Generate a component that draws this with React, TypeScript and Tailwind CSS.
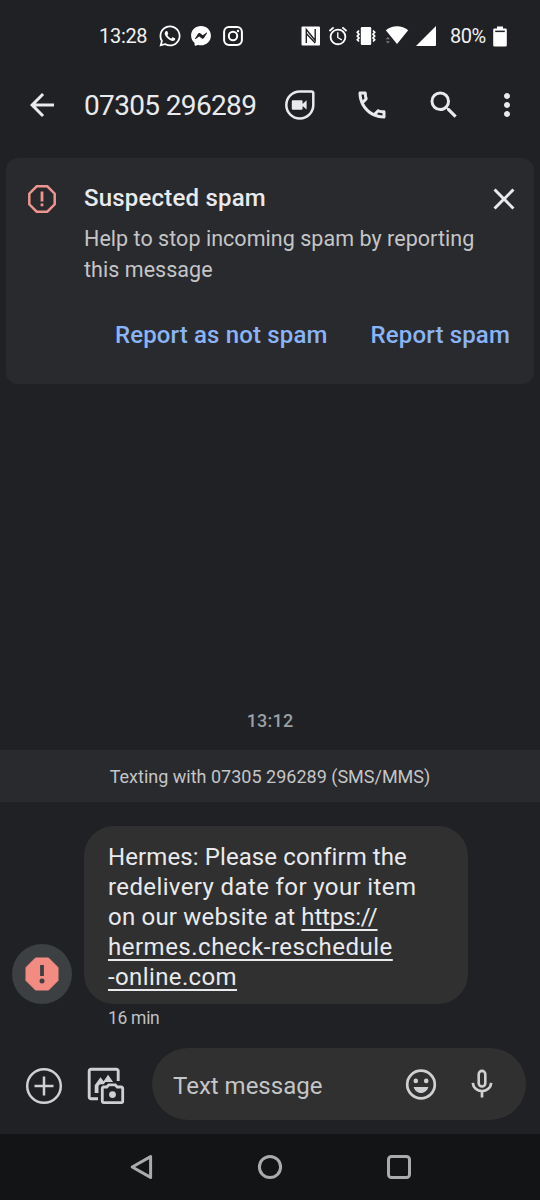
import type { ReactNode } from 'react';
import { MdAlarm, MdArrowBack, MdClose, MdMoreVert, MdOutlinePhone, MdSearch } from 'react-icons/md';
import { FaWhatsapp } from 'react-icons/fa';

type IconProps = { className?: string };

const WhatsappIcon = ({ className }: IconProps) => <FaWhatsapp size={24} className={className} />;

const MessengerIcon = ({ className }: IconProps) => (
  <svg width="20" height="20" viewBox="0 0 20 20" className={className}>
    <path
      fill="currentColor"
      d="M10 0C4.4 0 .1 4.1.1 9.5c0 2.9 1.2 5.4 3.1 7.1.2.1.3.4.3.6l.1 1.9c0 .6.6.9 1.1.7l2-.9h.5c.9.3 1.8.4 2.8.4 5.6 0 9.9-4.1 9.9-9.6S15.6 0 10 0z"
    />
    <path fill="#202124" d="M4 12.4 7 7.7c.5-.7 1.500-.9 2.200-.4l2.300 1.700c.2.2.5.2.7 0l3.100-2.300c.4-.3 1 .2.7.6l-3 4.700c-.5.7-1.500.9-2.200.4l-2.300-1.700c-.2-.2-.5-.2-.7 0l-3.100 2.300c-.4.3-1-.2-.7-.6z" />
  </svg>
);

const InstagramIcon = ({ className }: IconProps) => (
  <svg width="20" height="20" viewBox="0 0 20 20" className={className} fill="none" stroke="currentColor" strokeWidth="2">
    <rect x="1.1" y="1.1" width="17.8" height="17.8" rx="4.8" />
    <circle cx="10" cy="10" r="4.2" />
    <circle cx="15" cy="5" r="1.2" fill="currentColor" stroke="none" />
  </svg>
);

const NfcIcon = ({ className }: IconProps) => (
  <svg width="20" height="20" viewBox="0 0 20 20" className={className}>
    <rect x="0.5" y="0.5" width="18.5" height="19" rx="1" fill="currentColor" />
    <path d="M5.300 17V3.500L14.200 14.500V3M5.300 7.500 14.200 17" fill="none" stroke="#202124" strokeWidth="1.400" />
  </svg>
);

const VibrateIcon = ({ className }: IconProps) => (
  <svg width="20" height="20" viewBox="0 0 20 20" className={className}>
    <rect x="4.8" y="1" width="10.4" height="18" rx="1.2" fill="currentColor" />
    <g fill="none" stroke="currentColor" strokeWidth="1.7">
      <path d="M3 4.5 1.3 6.3 3 8.2 1.3 10.1 3 12 1.3 13.8 3 15.5" />
      <path d="M17 4.5 18.7 6.3 17 8.2 18.7 10.1 17 12 18.7 13.8 17 15.5" />
    </g>
  </svg>
);

const WifiIcon = ({ className }: IconProps) => (
  <svg width="24" height="20" viewBox="0 0 24 20" className={className}>
    <path fill="currentColor" d="M.8 5.2C7.3-.2 16.7-.2 23.2 5.2L12 19z" />
    <path fill="#77787a" d="M.8 14.3 2.9 12l2.1 2.300zM.8 16.200h4.200l-2.100 2.200z" />
  </svg>
);

const SignalIcon = ({ className }: IconProps) => (
  <svg width="22" height="22" viewBox="0 0 22 22" className={className}>
    <path fill="currentColor" d="M1 21 21 1v19a1 1 0 0 1-1 1z" />
  </svg>
);

const BatteryIcon = ({ className }: IconProps) => (
  <svg width="14" height="21" viewBox="0 0 14 21" className={className}>
    <path fill="currentColor" d="M4 .5h6v2h2.500a1.300 1.300 0 0 1 1.300 1.300v15.400a1.300 1.300 0 0 1-1.300 1.300h-11A1.300 1.300 0 0 1 .2 19.200V3.800a1.300 1.300 0 0 1 1.300-1.300H4z" />
    <path fill="#202124" d="M2.200 4.600h9.600v1.500H2.200z" />
  </svg>
);

const DuoIcon = ({ className }: IconProps) => (
  <svg width="32" height="32" viewBox="0 0 32 32" className={className}>
    <path
      d="M15.800 2.500H27.300a2 2 0 0 1 2 2V15.800A13.500 13.500 0 1 1 15.800 2.500z"
      fill="none"
      stroke="currentColor"
      strokeWidth="2.500"
    />
    <path fill="currentColor" d="M9 11.300h8.400a1.200 1.200 0 0 1 1.200 1.200v2.400l4-3.600v9.200l-4-3.500v2.500a1.200 1.200 0 0 1-1.200 1.200H9a1.200 1.200 0 0 1-1.200-1.200v-7A1.200 1.200 0 0 1 9 11.300z" />
  </svg>
);

const SpamOutlineIcon = ({ className }: IconProps) => (
  <svg width="28" height="28" viewBox="0 0 28 28" className={className}>
    <path d="M8.700 1.300h10.600l7.400 7.400v10.600l-7.400 7.400H8.700l-7.400-7.400V8.700z" fill="none" stroke="currentColor" strokeWidth="2.500" />
    <path d="M12.600 6.600h2.800v9.800h-2.800zM12.600 18.500h2.800v2.800h-2.800z" fill="currentColor" />
  </svg>
);

const SpamBadgeIcon = ({ className }: IconProps) => (
  <svg width="34" height="34" viewBox="0 0 34 34" className={className}>
    <path d="M10.500 1h13L33 10.500v13L23.500 33h-13L1 23.500v-13z" fill="#f28b82" stroke="#f28b82" strokeWidth="1" strokeLinejoin="round" />
    <path d="M15.100 8h3.800v11h-3.800z" fill="#3c4043" />
    <circle cx="17" cy="24" r="2.500" fill="#3c4043" />
  </svg>
);

const AddCircleIcon = ({ className }: IconProps) => (
  <svg width="38" height="38" viewBox="0 0 38 38" className={className} fill="none" stroke="currentColor" strokeWidth="2.500">
    <circle cx="19" cy="19" r="16.800" />
    <path d="M19 9.500v19M9.500 19h19" />
  </svg>
);

const GalleryCameraIcon = ({ className }: IconProps) => (
  <svg width="38" height="38" viewBox="0 0 38 38" className={className}>
    <path d="M31.200 14V4a1.800 1.800 0 0 0-1.800-1.800H4A1.800 1.800 0 0 0 2.200 4v26A1.800 1.800 0 0 0 4 31.800h7" fill="none" stroke="currentColor" strokeWidth="2.900" />
    <path fill="currentColor" d="M7.700 26V18.200l5.800-8 3.100 4 4.500-6.500 5 7.300h-7.500l-2 2.300h-2.500c-1.800 0-2.600 1-2.600 2.600V26z" />
    <path
      d="M16.600 20h3.200l2-2.200h6.400l2 2.200h4.200a1.300 1.300 0 0 1 1.300 1.300v13a1.300 1.300 0 0 1-1.300 1.300H16.600a1.300 1.300 0 0 1-1.300-1.300v-13a1.300 1.300 0 0 1 1.300-1.300z"
      fill="none"
      stroke="currentColor"
      strokeWidth="2.800"
    />
    <circle cx="25.500" cy="27.600" r="3.400" fill="currentColor" />
  </svg>
);

const EmojiIcon = ({ className }: IconProps) => (
  <svg width="32" height="32" viewBox="0 0 32 32" className={className}>
    <circle cx="16" cy="16.500" r="13.800" fill="none" stroke="currentColor" strokeWidth="2.700" />
    <circle cx="10.800" cy="12.900" r="2.300" fill="currentColor" />
    <circle cx="21.200" cy="12.900" r="2.300" fill="currentColor" />
    <path d="M8.600 19.100h14.800c-1 3.600-3.900 6-7.400 6s-6.400-2.400-7.400-6z" fill="currentColor" />
  </svg>
);

const MicIcon = ({ className }: IconProps) => (
  <svg width="24" height="32" viewBox="0 0 24 32" className={className} fill="none" stroke="currentColor">
    <rect x="8.700" y="2.900" width="6.600" height="15.600" rx="3.300" strokeWidth="2.600" />
    <path d="M2.800 14.800c.4 5 4.300 8.300 9.200 8.300s8.800-3.300 9.200-8.300M12 23v6.500" strokeWidth="2.700" />
  </svg>
);

const StatusBar = () => (
  <div className="flex h-[72px] items-center pl-[99px] text-xl text-white">
    <span className="w-[59px] tracking-[-0.3px] text-[#f1f1f2]">13:28</span>
    <WhatsappIcon />
    <MessengerIcon className="ml-[9px]" />
    <InstagramIcon className="ml-3" />
    <NfcIcon className="ml-[58px]" />
    <MdAlarm size={22} className="ml-1.5" />
    <VibrateIcon className="ml-[7px]" />
    <WifiIcon className="-mt-0.5 ml-[9px]" />
    <SignalIcon className="ml-1.5" />
    <span className="ml-[13px] w-[39px] tracking-[-0.5px] text-[#f1f1f2]">80%</span>
    <BatteryIcon className="ml-1" />
  </div>
);

const Header = ({ number }: { number: string }) => (
  <header className="flex h-16 items-center pl-6 pt-px text-[#e8eaed]">
    <button>
      <MdArrowBack size={36} />
    </button>
    <h1 className="ml-6 mt-[3px] w-[200px] whitespace-nowrap text-[28px] tracking-[-0.65px]">{number}</h1>
    <button>
      <DuoIcon />
    </button>
    <button className="ml-[38px]">
      <MdOutlinePhone size={36} />
    </button>
    <button className="ml-9">
      <MdSearch size={36} />
    </button>
    <button className="ml-[27px]">
      <MdMoreVert size={36} />
    </button>
  </header>
);

const SpamCard = () => (
  <section className="mx-1.5 mt-[22px] h-[226px] rounded-xl bg-[#292a2d]">
    <div className="flex pl-[22px] pt-[26px]">
      <SpamOutlineIcon className="mt-[1px] shrink-0 text-[#ee9491]" />
      <div className="ml-7 w-[402px]">
        <h2 className="text-2xl/7 font-medium tracking-[0.2px] text-[#e8eaed]">Suspected spam</h2>
        <p className="mt-[11px] whitespace-nowrap text-[21.500px]/[31px] tracking-[0.04px] text-[#c4c5c7]">
          Help to stop incoming spam by reporting
          <br />
          this message
        </p>
      </div>
      <button className="-mt-[3px] h-9 text-[#e8eaed]">
        <MdClose size={36} />
      </button>
    </div>
    <div className="mt-[34px] flex justify-end gap-[43px] pr-6 text-2xl/8 font-medium tracking-[0.15px] text-[#8ab4f8]">
      <button>Report as not spam</button>
      <button>Report spam</button>
    </div>
  </section>
);

const Avatar = ({ children }: { children: ReactNode }) => (
  <div className="flex size-[60px] items-center justify-center rounded-full bg-[#3c4043]">{children}</div>
);

const Message = () => (
  <div className="mt-6 pl-3">
    <div className="flex items-end gap-3">
      <Avatar>
        <SpamBadgeIcon />
      </Avatar>
      <div className="h-[178px] w-[384px] rounded-[30px] bg-[#303030] pl-6 pt-4 text-2xl/[30px] whitespace-nowrap text-[#e8eaed]">
        <span className="tracking-[0.1px]">Hermes: Please confirm the</span>
        <br />
        <span className="tracking-[0.38px]">redelivery date for your item</span>
        <br />
        <span className="tracking-[0.2px]">on our website at </span>
        <a className="underline decoration-2 underline-offset-4 [text-decoration-skip-ink:none]">
          <span className="tracking-[-0.2px]">https://</span>
          <br />
          <span className="tracking-[0.5px]">hermes.check-reschedule</span>
          <br />
          <span className="tracking-[0.38px]">-online.com</span>
        </a>
      </div>
    </div>
    <p className="ml-24 mt-0.5 text-[17.500px]/6 tracking-[-0.3px] text-[#bdc1c6]">16 min</p>
  </div>
);

const Composer = () => (
  <div className="mt-[18px] flex h-[72px] items-center pl-[25px] text-[#cfd0d2]">
    <AddCircleIcon className="mt-[3px]" />
    <GalleryCameraIcon className="ml-6 mt-[3px]" />
    <div className="ml-[27px] flex h-[72px] w-[374px] items-center rounded-full bg-[#303030] pl-[21px]">
      <span className="mt-[3px] w-[232px] text-2xl text-[#c4c5c7]">Text message</span>
      <EmojiIcon />
      <MicIcon className="ml-[33px]" />
    </div>
  </div>
);

const NavBar = () => (
  <nav className="mt-auto flex h-[66px] items-center bg-[#131416] pl-[130px] text-[#aaabad]">
    <svg width="24" height="26" viewBox="0 0 24 26" fill="none" stroke="currentColor" strokeWidth="3" strokeLinejoin="round">
      <path d="M20.600 2.600v20.800L2.200 13z" />
    </svg>
    <svg className="ml-[103px]" width="26" height="26" viewBox="0 0 26 26" fill="none" stroke="currentColor" strokeWidth="3">
      <circle cx="13" cy="13" r="10.600" />
    </svg>
    <svg className="ml-[103px]" width="26" height="26" viewBox="0 0 26 26" fill="none" stroke="currentColor" strokeWidth="3">
      <rect x="2.500" y="2.500" width="21" height="21" rx="3" />
    </svg>
  </nav>
);

const App = () => {
  const number = '07305 296289';

  return (
    <div className="flex h-[1200px] w-[540px] flex-col overflow-hidden bg-[#202124] font-['Roboto',sans-serif]">
      <StatusBar />
      <Header number={number} />
      <SpamCard />
      <main className="mt-[325px]">
        <p className="text-center text-[18px]/6 font-medium tracking-[0.2px] text-[#9aa0a6]">13:12</p>
        <div className="mt-[17px] flex h-[52px] items-center justify-center bg-[#292a2d] text-[18px] text-[#c4c5c7]">
          Texting with {number} (SMS/MMS)
        </div>
        <Message />
      </main>
      <Composer />
      <NavBar />
    </div>
  );
};

export default App;
